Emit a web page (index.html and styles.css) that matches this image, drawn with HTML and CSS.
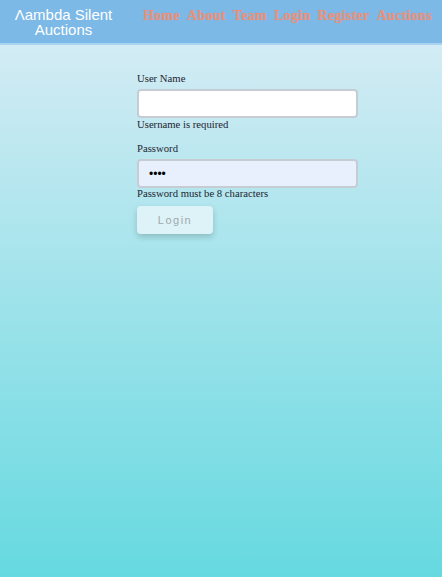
FILE: index.html
```html
<!DOCTYPE html>
<html>
<head>
<meta charset="utf-8">
<link rel="stylesheet" href="styles.css">
</head>
<body>
<header class="topbar">
  <div class="brand">Λambda Silent<br>Auctions</div>
  <nav class="nav">
    <a href="#">Home</a>
    <a href="#">About</a>
    <a href="#">Team</a>
    <a href="#">Login</a>
    <a href="#">Register</a>
    <a href="#">Auctions</a>
  </nav>
</header>
<main class="page">
  <form class="login-form">
    <label class="label">User Name</label>
    <input class="field" type="text">
    <div class="error">Username is required</div>
    <label class="label label-pw">Password</label>
    <input class="field field-filled" type="password" value="1234">
    <div class="error error-pw">Password must be 8 characters</div>
    <button class="btn" type="button">Login</button>
  </form>
</main>
</body>
</html>
```
FILE: styles.css
```css
html, body {
  margin: 0;
  padding: 0;
  height: 100%;
}
body {
  background: linear-gradient(to bottom, #dcedf6 0%, #66d9e0 100%);
  font-family: "Liberation Serif", serif;
  color: #1e2430;
  min-height: 577px;
}
.topbar {
  height: 43px;
  background: #7cb9e6;
  border-bottom: 2px solid #a9d3ef;
  display: flex;
  align-items: flex-start;
}
.brand {
  width: 127px;
  text-align: center;
  color: #fff;
  font-family: "Liberation Sans", sans-serif;
  font-size: 15px;
  line-height: 15px;
  padding-top: 7px;
}
.nav {
  display: flex;
  gap: 7px;
  padding-left: 16px;
  padding-top: 8px;
}
.nav a {
  color: #e8917c;
  font-weight: bold;
  font-size: 14px;
  letter-spacing: 0.3px;
  text-decoration: none;
  font-family: "Liberation Serif", serif;
  text-shadow: 0 0 1px rgba(232,145,124,0.6);
}
.page {
  display: flex;
  padding-left: 137px;
  padding-top: 27px;
}
.login-form {
  width: 221px;
  display: flex;
  flex-direction: column;
  align-items: flex-start;
}
.label {
  font-size: 10.7px;
  line-height: 12px;
  margin-bottom: 5px;
}
.label-pw {
  margin-top: 12px;
}
.field {
  box-sizing: border-box;
  width: 221px;
  height: 29px;
  border: 2px solid #c6ccd3;
  border-radius: 4px;
  background: #fff;
  padding: 0 10px;
  font-size: 12px;
  outline: none;
  margin: 0;
}
.field-filled {
  background: #e8f0fe;
}
.error {
  font-size: 10.7px;
  line-height: 12px;
}
.error-pw {
  line-height: 10px;
}
.btn {
  margin-top: 8px;
  width: 76px;
  height: 28px;
  border: none;
  border-radius: 4px;
  background: #def3f8;
  color: #a0a8ad;
  font-family: "Liberation Sans", sans-serif;
  font-size: 11px;
  letter-spacing: 1.5px;
  box-shadow: 0 3px 6px rgba(0,0,0,0.18);
}
```
